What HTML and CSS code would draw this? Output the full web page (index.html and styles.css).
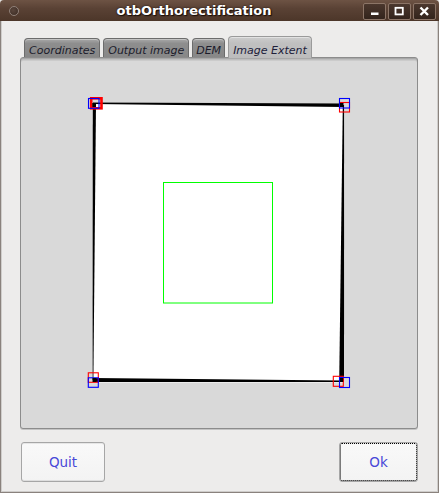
FILE: index.html
```html
<!DOCTYPE html>
<html>
<head>
<meta charset="utf-8">
<link rel="stylesheet" href="styles.css">
</head>
<body>
<div class="window">
  <div class="titlebar">
    <div class="tb-left"><span class="menu-dot"></span></div>
    <div class="title">otbOrthorectification</div>
    <div class="tb-buttons">
      <span class="tb-btn"><svg width="21" height="15" viewBox="0 0 21 15"><rect x="7" y="8.5" width="7.5" height="2.5" fill="#fff"/></svg></span>
      <span class="tb-btn"><svg width="21" height="15" viewBox="0 0 21 15"><rect x="6.5" y="3.8" width="7.3" height="6.6" fill="none" stroke="#fff" stroke-width="1.8"/></svg></span>
      <span class="tb-btn"><svg width="21" height="15" viewBox="0 0 21 15"><path d="M6.5 3.5 L14 11 M14 3.5 L6.5 11" stroke="#fff" stroke-width="2.4"/></svg></span>
    </div>
  </div>
  <div class="client">
    <div class="tabs">
      <div class="tab">Coordinates</div>
      <div class="tab">Output image</div>
      <div class="tab tab-dem">DEM</div>
      <div class="tab active">Image Extent</div>
    </div>
    <div class="panel">
      <svg class="canvas" width="396" height="370" viewBox="21 58 396 370">
        <polygon points="94,102.5 345,105 343.5,382.5 92.5,382.5" fill="#fff"/>
        <polygon points="93,102.5 343,103.5 343,107 93,104" fill="#000"/>
        <polygon points="92.8,103 96,103 93.4,380 92.6,380" fill="#000"/>
        <polygon points="93,378 93,382 341,382 341,380.6" fill="#000"/>
        <polygon points="342.8,105 344.2,105 344,382 339.2,382" fill="#000"/>
        <rect x="163.5" y="182.5" width="109" height="120.5" fill="none" stroke="#00ff00" stroke-width="1"/>
        <rect x="91.2" y="98.3" width="10.3" height="10" fill="none" stroke="#ff0000" stroke-width="2.6"/>
        <rect x="88.5" y="98.5" width="10.5" height="9.8" fill="none" stroke="#0000ff" stroke-width="1.1"/>
        <rect x="92.3" y="103" width="3" height="4" fill="#000"/>
        <rect x="339.5" y="102.5" width="10" height="9.5" fill="none" stroke="#ff0000" stroke-width="1.1"/>
        <rect x="339.5" y="98.5" width="10" height="9.5" fill="none" stroke="#0000ff" stroke-width="1.1"/>
        <rect x="340" y="103" width="3.5" height="4" fill="#000"/>
        <rect x="88.3" y="372.8" width="10" height="9.5" fill="none" stroke="#ff0000" stroke-width="1.1"/>
        <rect x="88.3" y="377.8" width="10" height="9.5" fill="none" stroke="#0000ff" stroke-width="1.1"/>
        <rect x="92.5" y="378" width="3.5" height="4" fill="#000"/>
        <rect x="333.3" y="376.3" width="10" height="10" fill="none" stroke="#ff0000" stroke-width="1.1"/>
        <rect x="339.5" y="377.5" width="10" height="10" fill="none" stroke="#0000ff" stroke-width="1.1"/>
        <rect x="340" y="378" width="3" height="4" fill="#000"/>
      </svg>
    </div>
    <div class="actions">
      <button class="btn btn-quit">Quit</button>
      <button class="btn btn-ok">Ok</button>
    </div>
  </div>
</div>
</body>
</html>
```
FILE: styles.css
```css
html, body {
  margin: 0;
  padding: 0;
}
body {
  width: 439px;
  height: 493px;
  background: #e4e2df;
  overflow: hidden;
}
.window {
  width: 439px;
  height: 493px;
  display: flex;
  flex-direction: column;
}
.titlebar {
  height: 21px;
  display: flex;
  align-items: stretch;
  background: linear-gradient(#6d5344, #5a4235 40%, #4c3629);
  border-radius: 4px 4px 0 0;
  color: #fff;
}
.tb-left {
  width: 25px;
  display: flex;
  align-items: center;
  padding-left: 9px;
  box-sizing: border-box;
}
.menu-dot {
  width: 8px;
  height: 8px;
  border-radius: 50%;
  border: 1px solid #8f8078;
  background: radial-gradient(circle at 40% 40%, #5a463c, #3a2a22);
}
.title {
  flex: 1;
  text-align: center;
  font-family: "DejaVu Sans", sans-serif;
  font-weight: bold;
  font-size: 13px;
  line-height: 21px;
  text-shadow: 0 0 2px #1a0e08, 1px 1px 1px #1a0e08;
  white-space: nowrap;
}
.tb-buttons {
  display: flex;
  gap: 2px;
  padding: 3px 3px 0 0;
}
.tb-btn {
  width: 21px;
  height: 15px;
  border: 1px solid #8c7567;
  border-radius: 2px;
  background: linear-gradient(#4a372d, #33241c);
  display: block;
}
.tb-btn svg {
  display: block;
}
.client {
  flex: 1;
  display: flex;
  flex-direction: column;
  background: #edeceb;
  border-left: 1px solid #8a827d;
  border-right: 1px solid #8a827d;
  border-bottom: 1px solid #8a827d;
  box-shadow: inset 1px 0 #cfcdcb, inset -1px 0 #cfcdcb, inset 0 -1px #cfcdcb;
  padding: 15px 20px 10px 19px;
}
.tabs {
  display: flex;
  align-items: flex-end;
  gap: 3px;
  margin-left: 4px;
  height: 21px;
}
.tab {
  height: 19px;
  box-sizing: border-box;
  padding: 5px 4px 0 4px;
  border: 1px solid #6c6c6c;
  border-bottom: none;
  border-radius: 4px 4px 0 0;
  background: linear-gradient(#a9a9a9, #8e8e8e 25%, #878787);
  box-shadow: inset 0 1px #c4c4c4;
  font-family: "DejaVu Sans", sans-serif;
  font-style: italic;
  font-size: 11px;
  line-height: 13px;
  color: #1c1c2c;
  white-space: nowrap;
}
.tab-dem {
  padding-left: 3px;
  padding-right: 3px;
}
.tab.active {
  height: 22px;
  margin-bottom: -1px;
  padding-top: 7px;
  border-color: #9a9a9a;
  background: linear-gradient(#cdcdcd, #c0c0c0 30%, #bcbcbc);
  box-shadow: inset 0 1px #e2e2e2;
  position: relative;
  z-index: 2;
  color: #20203a;
}
.panel {
  height: 372px;
  box-sizing: border-box;
  border: 1px solid #8c8c8c;
  border-radius: 3px;
  background: #d9d9d9;
  box-shadow: inset 0 1px #a8a8a8, inset 0 2px #bdbdbd, inset 0 3px #cbcbcb, 0 1px #c4c4c4;
  overflow: hidden;
}
.canvas {
  display: block;
}
.actions {
  display: flex;
  justify-content: space-between;
  margin-top: 13px;
  height: 40px;
  padding-left: 1px;
}
.btn {
  height: 40px;
  box-sizing: border-box;
  border: 1px solid #a6a6a6;
  border-radius: 3px;
  background: linear-gradient(#f9f9f9, #f3f3f3);
  box-shadow: inset 0 1px #e6e6e6, inset 0 -1px #dedede;
  font-family: "DejaVu Sans", sans-serif;
  font-size: 13.5px;
  color: #4848d8;
  padding: 0;
  margin: 0;
}
.btn-quit {
  width: 84px;
}
.btn-ok {
  width: 79px;
  outline: 1px dotted #000;
  outline-offset: -2px;
}
```
